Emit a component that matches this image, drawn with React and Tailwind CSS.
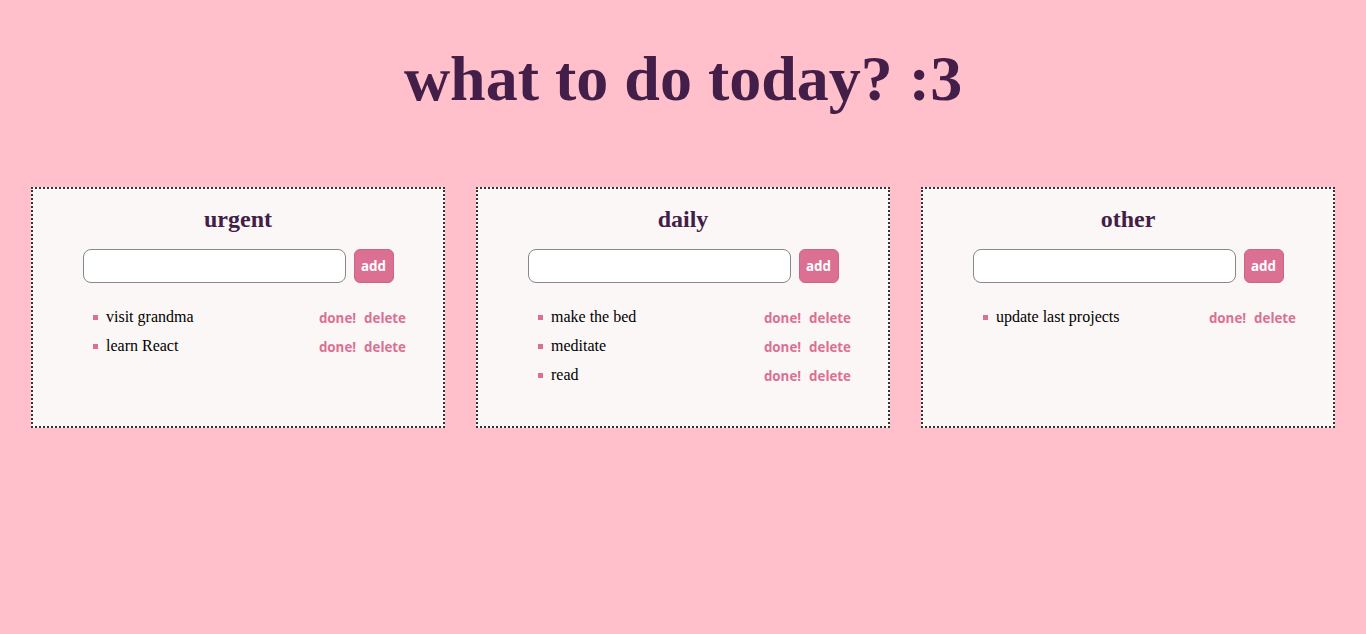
import React, { useState } from "react";

const initial = {
  urgent: ["visit grandma", "learn React"],
  daily: ["make the bed", "meditate", "read"],
  other: ["update last projects"],
};

const TodoCard = ({ title, items }) => {
  const [value, setValue] = useState("");

  return (
    <div className="bg-[#fcf7f7] border-2 border-dotted border-[#333] pt-4 pb-[37px]">
      {/* Card title */}
      <h2 className="text-center text-[24px] leading-[28px] font-bold text-[#431e48] font-['Liberation_Serif',serif]">
        {title}
      </h2>

      {/* Add form */}
      <div className="flex justify-center gap-2 mt-4">
        <input
          type="text"
          value={value}
          onChange={(e) => setValue(e.target.value)}
          className="w-[263px] h-[34px] bg-white border border-[#888] rounded-lg px-2"
        />
        <button className="w-[40px] h-[34px] pt-[2px] bg-[#db7093] border border-[#c9658a] rounded-md text-white text-[13.333px] font-bold font-['Open_Sans',sans-serif]">
          add
        </button>
      </div>

      {/* Items */}
      <ul className="mt-[19px] pl-[60px] pr-[37px]">
        {items.map((item) => (
          <li key={item} className="flex items-center justify-between h-[29px]">
            <div className="flex items-center">
              <span className="w-[5px] h-[5px] bg-[#db7093] mr-2 mt-[2px]" />
              <span className="text-[16px] text-black font-['Liberation_Serif',serif]">{item}</span>
            </div>
            <div className="flex gap-2 mt-[4px] text-[13.333px] font-bold text-[#db7093] font-['Open_Sans',sans-serif]">
              <button>done!</button>
              <button>delete</button>
            </div>
          </li>
        ))}
      </ul>
    </div>
  );
};

const App = () => {
  return (
    <div className="min-h-screen w-full bg-[#ffc0cb]">
      <h1 className="pt-[42px] text-center text-[64px] leading-[74px] font-bold text-[#431e48] font-['Liberation_Serif',serif]">
        what to do today? :3
      </h1>

      <div className="grid grid-cols-3 gap-[31px] px-[31px] mt-[71px]">
        {Object.entries(initial).map(([title, items]) => (
          <TodoCard key={title} title={title} items={items} />
        ))}
      </div>
    </div>
  );
};

export default App;
